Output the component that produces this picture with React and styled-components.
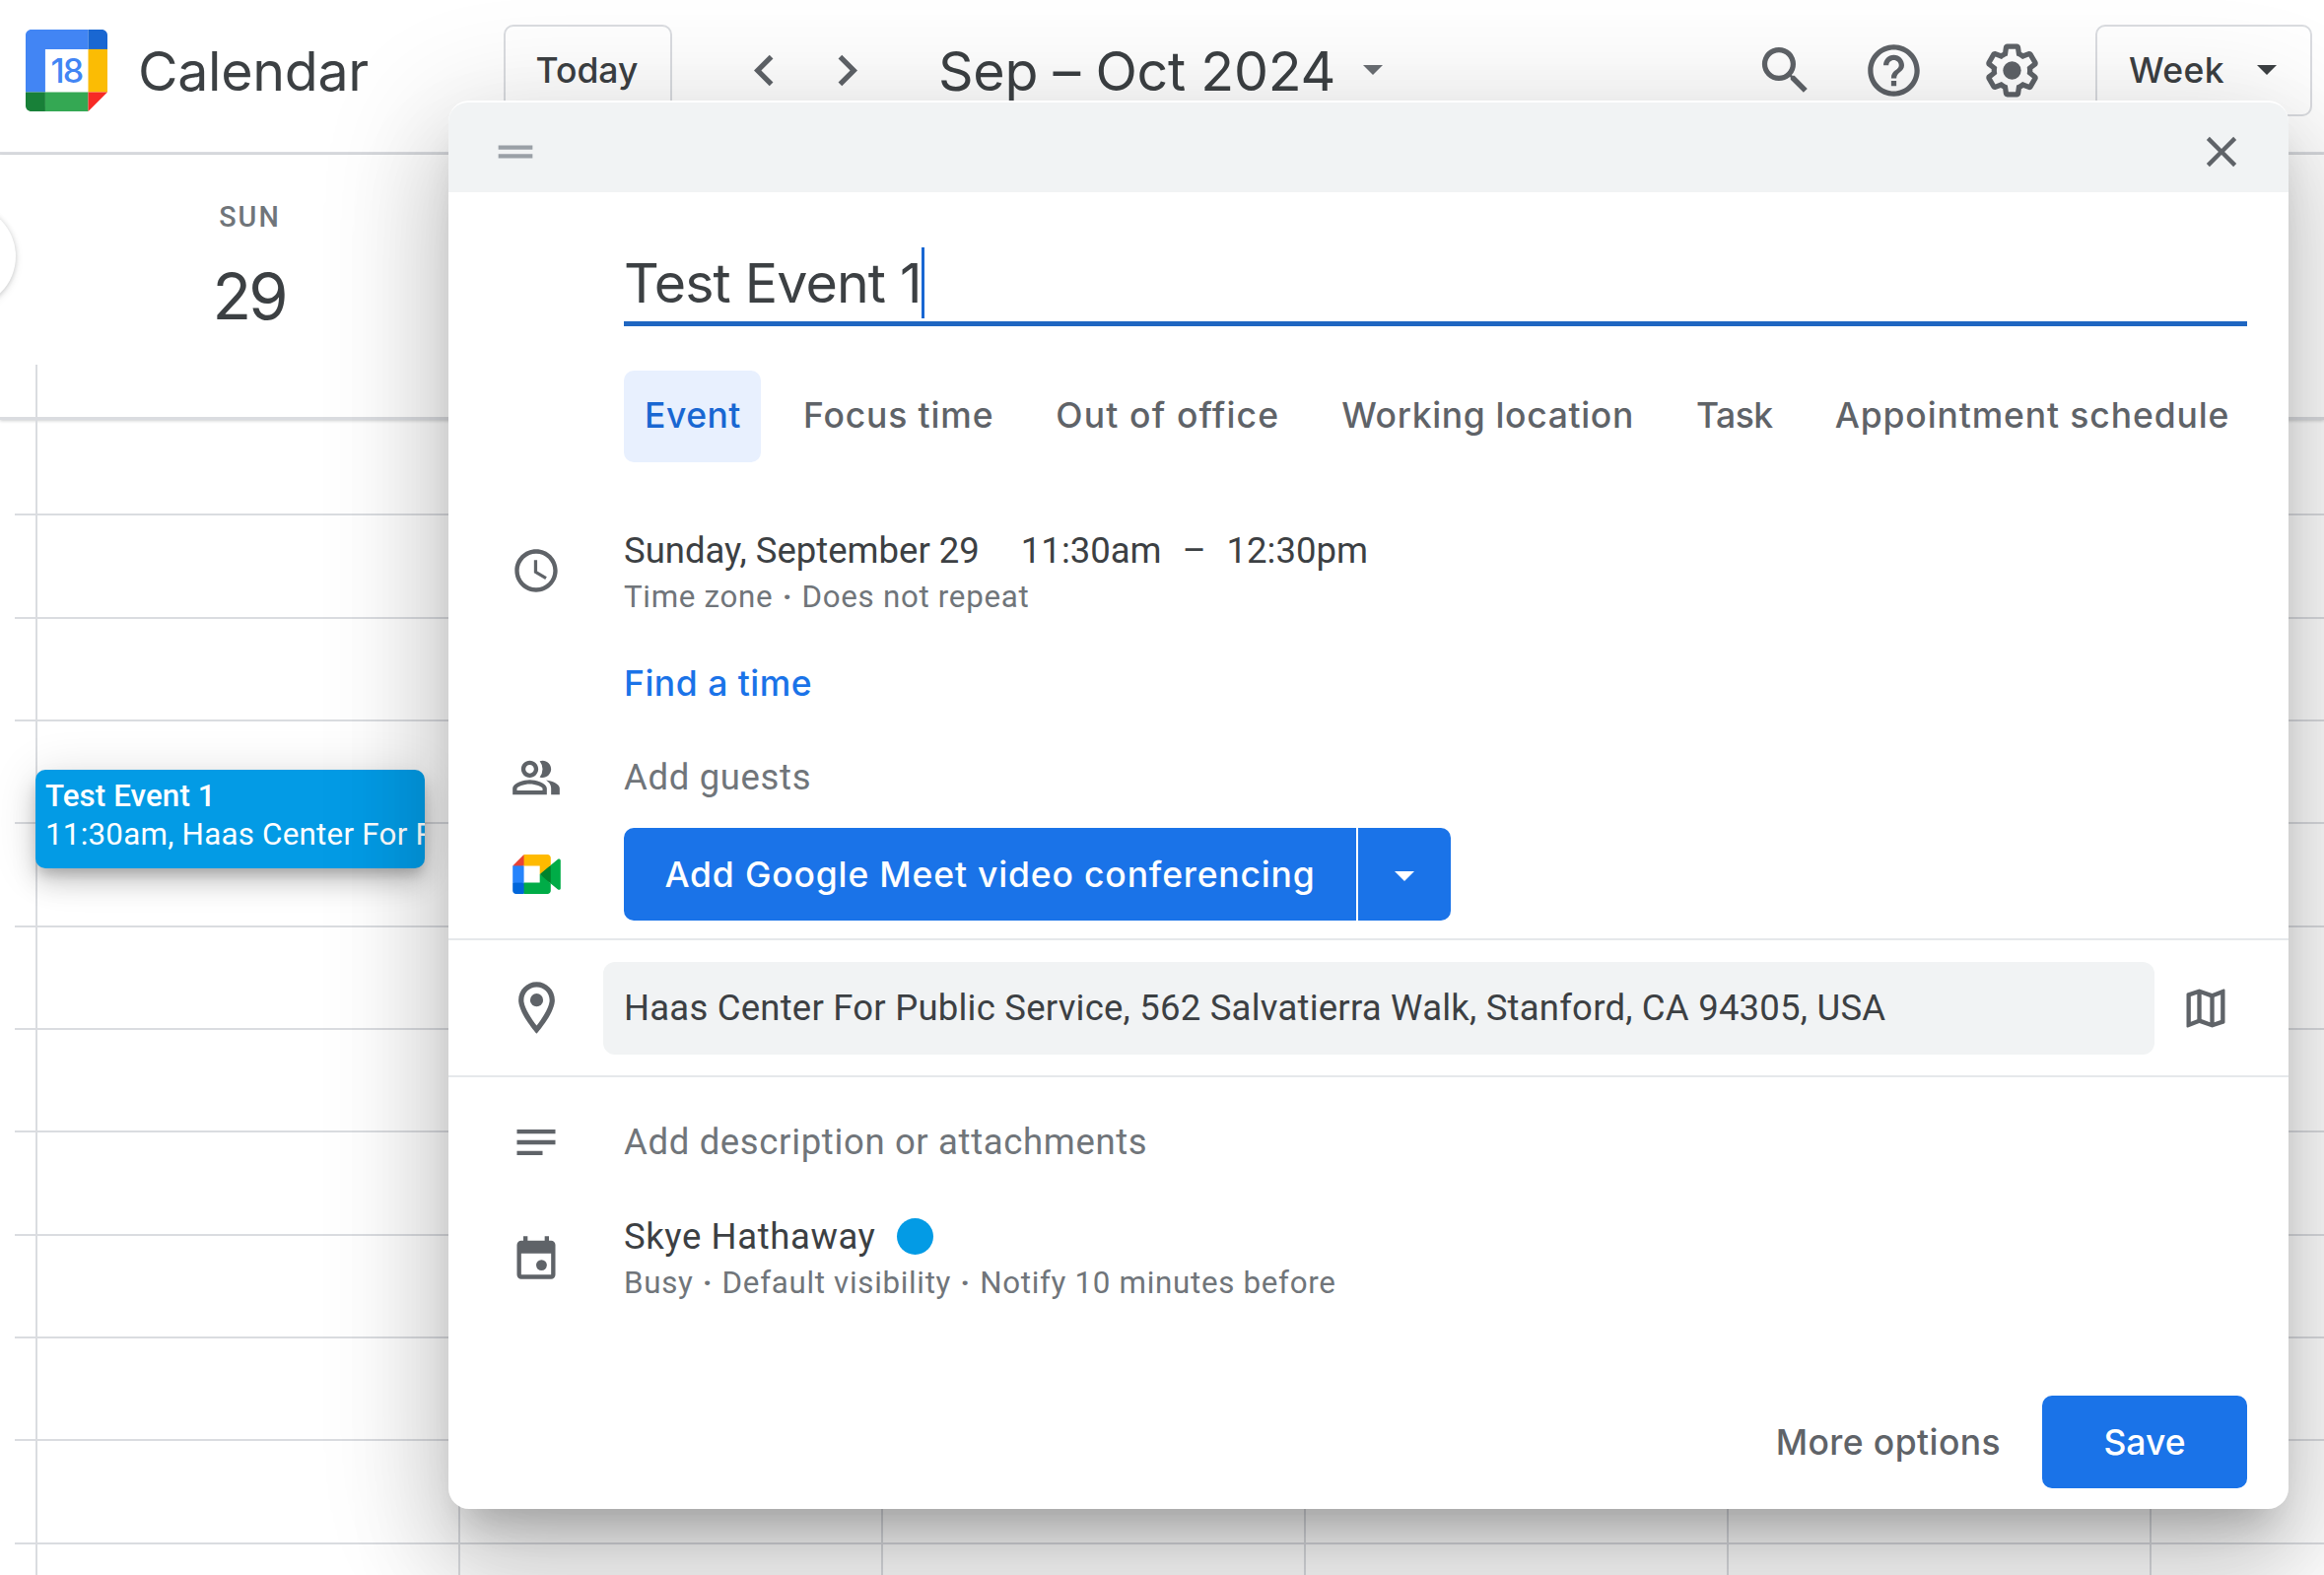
import React from 'react';
import styled, {createGlobalStyle, css} from 'styled-components';
import {
  MdAccessTime,
  MdChevronLeft,
  MdChevronRight,
  MdClose,
  MdDragHandle,
  MdHelpOutline,
  MdNotes,
  MdOutlineLocationOn,
  MdOutlineMap,
  MdOutlinePeopleAlt,
  MdSearch
} from 'react-icons/md';

const blue = '#1a73e8';
const ink = '#3c4043';
const grey = '#5f6368';
const muted = '#70757a';
const line = '#dadce0';

const displayFont = css`
  font-family: Inter, 'Liberation Sans', sans-serif;
`
const heading = css`
  ${displayFont}
  font-size: 55.5px;
  font-weight: 400;
  color: ${ink};
`
const label = css`
  ${displayFont}
  font-size: 35.5px;
  font-weight: 500;
  letter-spacing: ${props => props.track || 0}px;
`

const GlobalStyle = createGlobalStyle`
  * {
    box-sizing: border-box;
  }
  body {
    margin: 0;
    background: #fff;
    font-family: Roboto, 'Liberation Sans', sans-serif;
    overflow: hidden;
  }
  svg {
    display: block;
    flex: none;
  }
`

const Screen = styled.div`
  position: relative;
  width: 2358px;
  height: 1598px;
  overflow: hidden;
  white-space: nowrap;
`

/* top bar */
const TopBar = styled.header`
  display: flex;
  align-items: center;
  height: 157px;
  padding: 0 12px 12px 26px;
  border-bottom: 3px solid ${line};
  color: ${grey};
`
const Brand = styled.div`
  ${heading}
  display: flex;
  align-items: center;
  gap: 31px;
  width: 485px;
  letter-spacing: -0.3px;
`
const BarButton = styled.div`
  ${label}
  display: flex;
  align-items: center;
  justify-content: center;
  gap: 33px;
  width: ${props => props.width}px;
  height: 93px;
  padding-right: 2px;
  border: 2px solid ${line};
  border-radius: 10px;
  color: ${ink};
`
const Arrows = styled.div`
  display: flex;
  gap: 21px;
  margin-left: 62px;
`
const Period = styled.div`
  ${heading}
  display: flex;
  align-items: center;
  gap: 28px;
  margin-left: 61px;
  letter-spacing: -0.25px;
`
const Tools = styled.div`
  display: flex;
  gap: 53px;
  margin-left: auto;
  margin-right: 53px;
`
const Tool = styled.div`
  margin-left: ${props => props.inset || 0}px;
`

/* week view */
const DayHeader = styled.div`
  display: flex;
  align-items: flex-end;
  height: 269px;
  padding-left: 36px;
  border-bottom: 3px solid ${line};
  box-shadow: 0 1px 3px rgba(60, 64, 67, 0.25);
`
const Day = styled.div`
  display: flex;
  flex-direction: column;
  align-items: center;
  width: 429px;
  height: 100%;
  padding-top: 41px;
`
const DayName = styled.div`
  font-size: 28.7px;
  font-weight: 500;
  line-height: 44px;
  letter-spacing: 2px;
  padding-left: 2px;
  color: ${muted};
`
const DayNumber = styled.div`
  ${displayFont}
  font-size: 65px;
  line-height: 80px;
  margin-top: 19px;
  letter-spacing: -3px;
  color: ${ink};
`
const Tick = styled.div`
  width: 2px;
  height: 53px;
  background: ${line};
`
const HourRow = styled.div`
  display: flex;
  height: ${props => props.first ? 97.2 : 104.35}px;
  margin-left: 15px;
`
const HourStub = styled.div`
  flex: none;
  width: 21px;
  border-bottom: 2px solid ${line};
`
const HourCell = styled.div`
  flex: none;
  width: 429px;
  border-left: 2px solid ${line};
  border-bottom: 2px solid ${line};
`
const Collapse = styled.div`
  position: absolute;
  left: -88px;
  top: 208px;
  width: 104px;
  height: 104px;
  border-radius: 50%;
  background: #fff;
  box-shadow: 0 1px 5px rgba(60, 64, 67, 0.25), 0 3px 10px rgba(60, 64, 67, 0.08);
`
const Chip = styled.div`
  position: absolute;
  left: 36px;
  top: 781px;
  width: 395px;
  height: 100px;
  padding: 7px 0 0 10px;
  border-radius: 10px;
  background: #039be5;
  color: #fff;
  font-size: 31.3px;
  line-height: 39px;
  letter-spacing: 0.25px;
  box-shadow: 0 16px 26px rgba(0, 0, 0, 0.14), 0 3px 47px rgba(0, 0, 0, 0.12), 0 8px 13px -3px rgba(0, 0, 0, 0.2);
`
const ChipText = styled.div`
  overflow: hidden;
`
const ChipTitle = styled(ChipText)`
  font-weight: 500;
  letter-spacing: 0.1px;
`

/* quick event dialog */
const Dialog = styled.section`
  position: absolute;
  left: 455px;
  top: 102px;
  width: 1867px;
  height: 1429px;
  padding-top: 2px;
  border-radius: 21px;
  background: #fff;
  box-shadow: 0 63px 99px 8px rgba(0, 0, 0, 0.14), 0 23px 120px 21px rgba(0, 0, 0, 0.12), 0 29px 39px -18px rgba(0, 0, 0, 0.2);
`
const DialogBar = styled.div`
  display: flex;
  align-items: center;
  justify-content: space-between;
  height: 91px;
  padding: 9px 42px 0;
  border-radius: 20px 20px 0 0;
  background: #f1f3f4;
  color: ${grey};
`
const TitleField = styled.div`
  ${heading}
  display: flex;
  height: 80px;
  margin: 56px 42px 0 178px;
  line-height: 72px;
  letter-spacing: -0.85px;
  border-bottom: 5px solid #1f66c1;
`
const Caret = styled.span`
  width: 3px;
  height: 72px;
  background: #1967d2;
`
const Tabs = styled.nav`
  display: flex;
  gap: 22px;
  height: 93px;
  margin: 45px 0 66px 178px;
`
const Tab = styled.div`
  ${label}
  padding: 0 20px 0 21px;
  line-height: 92px;
  border-radius: 10px;
  color: ${grey};
  ${props => props.active && css`
    color: #1967d2;
    background: #e8f0fe;
  `}
`
const Row = styled.div`
  display: flex;
  align-items: ${props => props.top ? 'flex-start' : 'center'};
  height: ${props => props.height}px;
  color: ${grey};
`
const MeetRow = styled(Row)`
  margin: 20px 0 18px;
`
const OwnerRow = styled(Row)`
  margin-top: 7px;
`
const Slot = styled.div`
  display: flex;
  align-items: center;
  justify-content: center;
  flex: none;
  width: 178px;
  height: ${props => props.height ? props.height + 'px' : 'auto'};
`
const Main = styled.div`
  display: flex;
  align-items: center;
  gap: ${props => props.gap || 0}px;
  font-size: 36.5px;
  line-height: 47px;
  letter-spacing: ${props => props.track || 0}px;
  color: ${ink};
`
const Sub = styled.div`
  font-size: 31.3px;
  line-height: 47px;
  letter-spacing: 0.7px;
  color: ${muted};
`
const Dot = styled.span`
  margin: 0 1px;
  font-weight: 700;
`
const Placeholder = styled.div`
  font-size: 36.5px;
  letter-spacing: 0.65px;
  color: ${muted};
`
const Link = styled.div`
  ${label}
  padding-top: 1px;
  color: ${blue};
`
const Button = styled.div`
  ${label}
  display: flex;
  align-items: center;
  justify-content: center;
  width: ${props => props.width}px;
  height: 94px;
  border-radius: 10px;
  background: ${blue};
  color: #fff;
`
const SplitButton = styled.div`
  display: flex;
  gap: 2px;

  ${Button}:first-child {
    border-radius: 10px 0 0 10px;
  }
  ${Button}:last-child {
    padding-top: 4px;
    border-radius: 0 10px 10px 0;
  }
`
const Divider = styled.div`
  height: 2px;
  background: #e6e8eb;
`
const LocationField = styled.div`
  width: 1574px;
  height: 94px;
  margin: 0 26px 0 -21px;
  padding-left: 21px;
  border-radius: 12px;
  background: #f1f3f4;
  color: ${ink};
  font-size: 36.5px;
  line-height: 94px;
  letter-spacing: 0.22px;
`
const ColorDot = styled.span`
  width: 37px;
  height: 37px;
  border-radius: 50%;
  background: #039be5;
`
const Footer = styled.footer`
  display: flex;
  align-items: center;
  justify-content: flex-end;
  gap: 42px;
  margin: 90px 42px 0 0;
`
const TextButton = styled.div`
  ${label}
  color: ${grey};
`

const Triangle = ({color}) => (
  <svg width="20" height="10" viewBox="0 0 20 10">
    <path d="M0 0h20L10 10z" fill={color}/>
  </svg>
)

const CalendarLogo = () => (
  <svg width="83" height="83" viewBox="0 0 200 200">
    <path fill="#fff" d="M47 47h106v106H47z"/>
    <path fill="#4285f4" d="M153 0H14C6 0 0 6 0 14v139h48V48h105z"/>
    <path fill="#1967d2" d="M200 48V14c0-8-6-14-14-14h-33v48z"/>
    <path fill="#fbbc04" d="M153 48h47v105h-47z"/>
    <path fill="#34a853" d="M48 153h105v47H48z"/>
    <path fill="#188038" d="M0 153v33c0 8 6 14 14 14h34v-47z"/>
    <path fill="#f72a25" d="M153 200l47-47h-47z"/>
    <text x="100" y="129" textAnchor="middle" fontFamily="Inter, sans-serif" fontSize="82" fontWeight="500" letterSpacing="-4" fill="#4285f4">18</text>
  </svg>
)

const SettingsIcon = () => (
  <svg width="63" height="63" viewBox="0 0 24 24" fill="currentColor">
    <path d="M13.85 22.25h-3.7c-.74 0-1.36-.54-1.45-1.27l-.27-1.89c-.27-.14-.53-.29-.79-.46l-1.8.72c-.7.26-1.47-.03-1.81-.65L2.2 15.53c-.35-.66-.2-1.44.36-1.88l1.53-1.19c-.01-.15-.02-.3-.02-.46 0-.15.01-.31.02-.46l-1.52-1.19c-.59-.45-.74-1.26-.37-1.88l1.85-3.19c.34-.62 1.11-.9 1.79-.63l1.81.73c.26-.17.52-.32.78-.46l.27-1.91c.09-.7.71-1.25 1.44-1.25h3.7c.74 0 1.36.54 1.45 1.27l.27 1.89c.27.14.53.29.79.46l1.8-.72c.71-.26 1.48.03 1.82.65l1.84 3.18c.36.66.2 1.44-.36 1.88l-1.52 1.19c.01.15.02.3.02.46s-.01.31-.02.46l1.52 1.19c.56.45.72 1.23.37 1.86l-1.86 3.22c-.34.62-1.11.9-1.8.63l-1.8-.72c-.26.17-.52.32-.78.46l-.27 1.91c-.1.68-.72 1.22-1.46 1.22zm-3.23-2h2.76l.37-2.55.53-.22c.44-.18.88-.44 1.34-.78l.45-.34 2.38.96 1.38-2.4-2.03-1.58.07-.56c.03-.26.06-.51.06-.78s-.03-.53-.06-.78l-.07-.56 2.03-1.58-1.39-2.4-2.39.96-.45-.35c-.42-.32-.87-.58-1.33-.77l-.52-.22-.37-2.55h-2.76l-.37 2.55-.53.21c-.44.19-.88.44-1.34.79l-.45.33-2.38-.95-1.39 2.39 2.03 1.58-.07.56a7 7 0 0 0-.06.79c0 .26.02.53.06.78l.07.56-2.03 1.58 1.38 2.4 2.39-.96.45.35c.43.33.86.58 1.33.77l.53.22z"/>
    <circle cx="12" cy="12" r="3.5"/>
  </svg>
)

const MeetIcon = () => (
  <svg width="49" height="40" viewBox="0 0 87.5 72">
    <path fill="#00832d" d="M49.5 36l8.53 9.75 11.47 7.33 2-17.02-2-16.64-11.69 6.44z"/>
    <path fill="#0066da" d="M0 51.5V66c0 3.3 2.7 6 6 6h14.5l3-10.96-3-9.54-9.95-3z"/>
    <path fill="#e94235" d="M20.5 0L0 20.5l10.55 3 9.95-3 2.95-9.41z"/>
    <path fill="#2684fc" d="M20.5 20.5H0v31h20.5z"/>
    <path fill="#00ac47" d="M82.6 8.68L69.5 19.42v33.66l13.16 10.79c1.97 1.54 4.85.13 4.85-2.37V11c0-2.53-2.95-3.92-4.91-2.32zM49.5 36v15.5h-29V72h43c3.3 0 6-2.7 6-6V53.08z"/>
    <path fill="#ffba00" d="M63.5 0h-43v20.5h29V36l20-16.57V6c0-3.3-2.7-6-6-6z"/>
  </svg>
)

const OwnerIcon = () => (
  <svg width="52" height="52" viewBox="0 0 24 24" fill="currentColor">
    <path fillRule="evenodd" d="M19 4h-1V2h-2v2H8V2H6v2H5a2 2 0 0 0-2 2v14a2 2 0 0 0 2 2h14a2 2 0 0 0 2-2V6a2 2 0 0 0-2-2zm0 16H5V10h14z"/>
    <circle cx="14.5" cy="15.5" r="2.5"/>
  </svg>
)

const tabs = [
  {name: 'Event', track: 0.5},
  {name: 'Focus time', track: 0.85},
  {name: 'Out of office', track: 1.15},
  {name: 'Working location', track: 0.65},
  {name: 'Task', track: -0.5},
  {name: 'Appointment schedule', track: 0.88}
];

const hours = Array.from({length: 12}, (_, i) => i);
const days = [0, 1, 2, 3, 4, 5];

function Toolbar() {
  return (
    <TopBar>
      <Brand><CalendarLogo/>Calendar</Brand>
      <BarButton width={171}>Today</BarButton>
      <Arrows>
        <MdChevronLeft size={63}/>
        <MdChevronRight size={63}/>
      </Arrows>
      <Period>
        Sep – Oct 2024
        <Triangle color="#6b6f74"/>
      </Period>
      <Tools>
        <MdSearch size={63}/>
        <Tool inset={-6}><MdHelpOutline size={63}/></Tool>
        <Tool inset={4}><SettingsIcon/></Tool>
      </Tools>
      <BarButton width={220} track={0.4}>Week<Triangle color={ink}/></BarButton>
    </TopBar>
  );
}

function WeekView() {
  return (
    <div>
      <DayHeader>
        <Tick/>
        <Day>
          <DayName>SUN</DayName>
          <DayNumber>29</DayNumber>
        </Day>
      </DayHeader>
      {hours.map(hour => (
        <HourRow key={hour} first={hour === 0}>
          <HourStub/>
          {days.map(day => <HourCell key={day}/>)}
        </HourRow>
      ))}
      <Collapse/>
      <Chip>
        <ChipTitle>Test Event 1</ChipTitle>
        <ChipText>11:30am, Haas Center For Public Service</ChipText>
      </Chip>
    </div>
  );
}

function EventDialog() {
  return (
    <Dialog>
      <DialogBar>
        <MdDragHandle size={52} color="#9aa0a6"/>
        <MdClose size={52}/>
      </DialogBar>
      <TitleField>Test Event 1<Caret/></TitleField>
      <Tabs>
        {tabs.map(({name, track}, i) => (
          <Tab key={name} track={track} active={i === 0}>{name}</Tab>
        ))}
      </Tabs>

      <Row top height={94}>
        <Slot height={88}><MdAccessTime size={52}/></Slot>
        <div>
          <Main gap={42}>
            <span>Sunday, September 29</span>
            <Main gap={21}><span>11:30am</span><span>–</span><span>12:30pm</span></Main>
          </Main>
          <Sub>Time zone <Dot>·</Dot> Does not repeat</Sub>
        </div>
      </Row>
      <Row height={128}>
        <Slot/>
        <Link track={0.5}>Find a time</Link>
      </Row>
      <Row height={63}>
        <Slot><MdOutlinePeopleAlt size={52}/></Slot>
        <Placeholder>Add guests</Placeholder>
      </Row>
      <MeetRow height={94}>
        <Slot><MeetIcon/></Slot>
        <SplitButton>
          <Button width={743} track={0.82}>Add Google Meet video conferencing</Button>
          <Button width={94}><Triangle color="#fff"/></Button>
        </SplitButton>
      </MeetRow>
      <Divider/>
      <Row height={137}>
        <Slot><MdOutlineLocationOn size={63}/></Slot>
        <LocationField>Haas Center For Public Service, 562 Salvatierra Walk, Stanford, CA 94305, USA</LocationField>
        <MdOutlineMap size={52}/>
      </Row>
      <Divider/>
      <Row height={131}>
        <Slot><MdNotes size={52}/></Slot>
        <Placeholder>Add description or attachments</Placeholder>
      </Row>
      <OwnerRow top height={95}>
        <Slot height={89}><OwnerIcon/></Slot>
        <div>
          <Main gap={21} track={0.6}>Skye Hathaway<ColorDot/></Main>
          <Sub>Busy <Dot>·</Dot> Default visibility <Dot>·</Dot> Notify 10 minutes before</Sub>
        </div>
      </OwnerRow>

      <Footer>
        <TextButton track={0.4}>More options</TextButton>
        <Button width={208}>Save</Button>
      </Footer>
    </Dialog>
  );
}

export default function App() {
  return (
    <Screen>
      <GlobalStyle/>
      <Toolbar/>
      <WeekView/>
      <EventDialog/>
    </Screen>
  );
}
